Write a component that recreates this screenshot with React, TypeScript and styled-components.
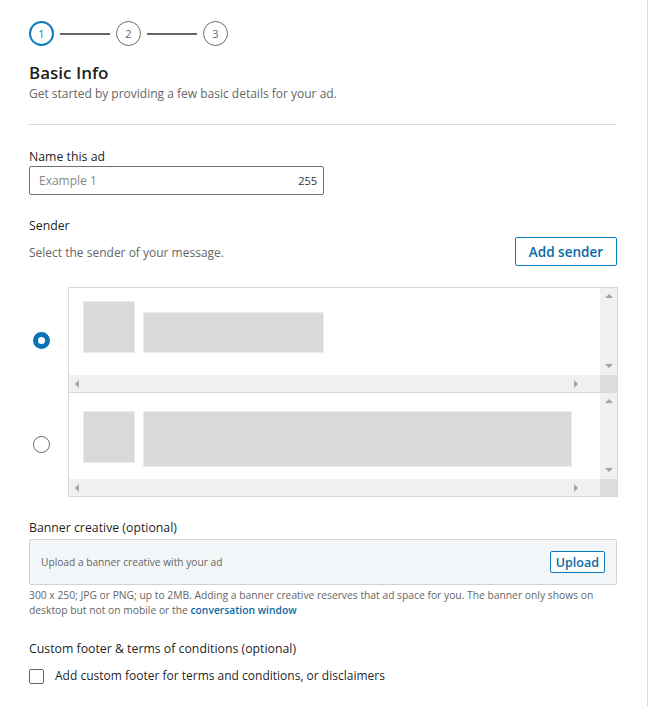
import React from "react";
import styled, { createGlobalStyle } from "styled-components";

const Global = createGlobalStyle`
  html, body { margin: 0; padding: 0; background: #fff; }
  body { font-family: "Open Sans", "Noto Sans", sans-serif; color: #000000e6; }
  * { box-sizing: border-box; }
`;

const Page = styled.div`
  width: 648px;
  min-height: 706px;
  border-right: 1px solid #dcdcdc;
  padding: 21px 30px 20px 29px;
`;

const Stepper = styled.div`
  display: flex;
  align-items: center;
  gap: 6px;
`;

const StepCircle = styled.div<{ $active?: boolean }>`
  width: 25px;
  height: 25px;
  border-radius: 50%;
  border: ${(p) => (p.$active ? "2px solid #0a7bbd" : "1px solid #6b6b6b")};
  color: ${(p) => (p.$active ? "#0a7bbd" : "#666")};
  display: flex;
  align-items: center;
  justify-content: center;
  font-size: 11px;
`;

const StepLine = styled.div`
  width: 50px;
  height: 2px;
  background: #666;
`;

const Title = styled.h1`
  margin: 16px 0 0;
  font-size: 17px;
  font-weight: 600;
  color: #000000e6;
  line-height: 22px;
`;

const Subtitle = styled.p`
  margin: 1px 0 0;
  font-size: 12px;
  color: #666;
  line-height: 18px;
`;

const Divider = styled.hr`
  border: none;
  border-top: 1px solid #dcdcdc;
  margin: 21px 0 0;
`;

const Label = styled.div<{ $top: number }>`
  margin-top: ${(p) => p.$top}px;
  font-size: 12.3px;
  font-weight: 500;
  line-height: 18px;
  color: #000000e6;
`;

const InputBox = styled.div`
  width: 295px;
  height: 29px;
  border: 1px solid #707070;
  border-radius: 2px;
  display: flex;
  align-items: center;
  justify-content: space-between;
  padding: 0 6px 0 9px;
  font-size: 12px;
`;

const Placeholder = styled.span`
  color: #888;
`;

const Counter = styled.span`
  color: #333;
  font-size: 11px;
`;

const SenderHead = styled.div`
  display: flex;
  align-items: flex-end;
  justify-content: space-between;
  margin-top: 2px;
`;

const Muted = styled.span`
  font-size: 12px;
  color: #666;
  line-height: 18px;
  padding-bottom: 4px;
`;

const OutlineButton = styled.button<{ $small?: boolean }>`
  background: #fff;
  border: 1px solid #0a7bbd;
  border-radius: 2px;
  color: #0a6aa6;
  font-family: inherit;
  font-weight: 600;
  font-size: ${(p) => (p.$small ? "12.5px" : "13.5px")};
  height: ${(p) => (p.$small ? "22px" : "29px")};
  padding: ${(p) => (p.$small ? "0 5px" : "0 13px")};
  cursor: pointer;
`;

const SenderList = styled.div`
  margin-top: 21px;
  display: grid;
  grid-template-columns: 39px 550px;
`;

const RadioCol = styled.div`
  display: grid;
  grid-template-rows: 105px 104px;
`;

const RadioCell = styled.div`
  display: flex;
  align-items: center;
  padding: 1px 0 0 4px;
`;

const Radio = styled.div<{ $checked?: boolean }>`
  width: 17px;
  height: 17px;
  border-radius: 50%;
  border: ${(p) => (p.$checked ? "5px solid #0a73b5" : "1px solid #666")};
  background: #fff;
`;

const ListBox = styled.div`
  border: 1px solid #d9d9d9;
  display: flex;
  flex-direction: column;
`;

const ScrollRow = styled.div<{ $first?: boolean }>`
  display: grid;
  grid-template-columns: 1fr 17px;
  grid-template-rows: ${(p) => (p.$first ? "87px" : "86px")} 17px;
  border-top: ${(p) => (p.$first ? "none" : "1px solid #d9d9d9")};
`;

const Viewport = styled.div<{ $first?: boolean }>`
  display: flex;
  align-items: flex-start;
  gap: 8px;
  padding: ${(p) => (p.$first ? "13px 0 0 14px" : "18px 0 0 14px")};
`;

const Avatar = styled.div`
  width: 52px;
  height: 52px;
  background: #d9d9d9;
  border: 1px solid #ececec;
`;

const Bar = styled.div<{ $w: number; $h: number; $mt: number }>`
  width: ${(p) => p.$w}px;
  height: ${(p) => p.$h}px;
  margin-top: ${(p) => p.$mt}px;
  background: #d9d9d9;
  border: 1px solid #ececec;
`;

const VTrack = styled.div`
  background: #f0f0f0;
  display: flex;
  flex-direction: column;
  justify-content: space-between;
  align-items: center;
  padding: 6px 0 7px;
`;

const HTrack = styled.div`
  background: #f0f0f0;
  display: flex;
  justify-content: space-between;
  align-items: center;
  padding: 0 22px 0 6px;
`;

const Corner = styled.div`
  background: #dcdcdc;
`;

const Arrow = styled.span<{ $dir: "up" | "down" | "left" | "right" }>`
  width: 0;
  height: 0;
  border-style: solid;
  ${(p) =>
    p.$dir === "up"
      ? "border-width: 0 4px 4px 4px; border-color: transparent transparent #a3a3a3 transparent;"
      : p.$dir === "down"
      ? "border-width: 4px 4px 0 4px; border-color: #a3a3a3 transparent transparent transparent;"
      : p.$dir === "left"
      ? "border-width: 4px 4px 4px 0; border-color: transparent #a3a3a3 transparent transparent;"
      : "border-width: 4px 0 4px 4px; border-color: transparent transparent transparent #a3a3a3;"}
`;

const UploadBox = styled.div`
  margin-top: 2px;
  height: 46px;
  background: #f3f6f8;
  border: 1px solid #cfd3d6;
  border-radius: 2px;
  display: flex;
  align-items: center;
  justify-content: space-between;
  padding: 0 11px 0 11px;
`;

const UploadHint = styled.span`
  font-size: 10.2px;
  color: #666;
`;

const Help = styled.p`
  margin: 3px 0 0;
  font-size: 10.3px;
  line-height: 15px;
  color: #666;
`;

const HelpLink = styled.a`
  color: #0a6aa6;
  font-weight: 600;
  text-decoration: none;
`;

const CheckRow = styled.label`
  margin-top: 9px;
  display: flex;
  align-items: center;
  gap: 11px;
  font-size: 12px;
  line-height: 18px;
  color: #000000e6;
`;

const CheckBox = styled.span`
  width: 15px;
  height: 15px;
  border: 1px solid #666;
  border-radius: 2px;
  background: #fff;
`;

function SenderRow({ first, barW, barH, barMt }: { first?: boolean; barW: number; barH: number; barMt: number }) {
  return (
    <ScrollRow $first={first}>
      <Viewport $first={first}>
        <Avatar />
        <Bar $w={barW} $h={barH} $mt={barMt} />
      </Viewport>
      <VTrack>
        <Arrow $dir="up" />
        <Arrow $dir="down" />
      </VTrack>
      <HTrack>
        <Arrow $dir="left" />
        <Arrow $dir="right" />
      </HTrack>
      <Corner />
    </ScrollRow>
  );
}

export default function App() {
  return (
    <>
      <Global />
      <Page>
        <Stepper>
          <StepCircle $active>1</StepCircle>
          <StepLine />
          <StepCircle>2</StepCircle>
          <StepLine />
          <StepCircle>3</StepCircle>
        </Stepper>
        <Title>Basic Info</Title>
        <Subtitle>Get started by providing a few basic details for your ad.</Subtitle>
        <Divider />
        <Label $top={23}>Name this ad</Label>
        <InputBox>
          <Placeholder>Example 1</Placeholder>
          <Counter>255</Counter>
        </InputBox>
        <Label $top={22}>Sender</Label>
        <SenderHead>
          <Muted>Select the sender of your message.</Muted>
          <OutlineButton>Add sender</OutlineButton>
        </SenderHead>
        <SenderList>
          <RadioCol>
            <RadioCell>
              <Radio $checked />
            </RadioCell>
            <RadioCell>
              <Radio />
            </RadioCell>
          </RadioCol>
          <ListBox>
            <SenderRow first barW={181} barH={41} barMt={11} />
            <SenderRow barW={429} barH={56} barMt={0} />
          </ListBox>
        </SenderList>
        <Label $top={22}>Banner creative (optional)</Label>
        <UploadBox>
          <UploadHint>Upload a banner creative with your ad</UploadHint>
          <OutlineButton $small>Upload</OutlineButton>
        </UploadBox>
        <Help>
          300 x 250; JPG or PNG; up to 2MB. Adding a banner creative reserves that ad space for you. The banner only shows on
          desktop but not on mobile or the <HelpLink href="#">conversation window</HelpLink>
        </Help>
        <Label $top={22}>Custom footer &amp; terms of conditions (optional)</Label>
        <CheckRow>
          <CheckBox />
          Add custom footer for terms and conditions, or disclaimers
        </CheckRow>
      </Page>
    </>
  );
}
